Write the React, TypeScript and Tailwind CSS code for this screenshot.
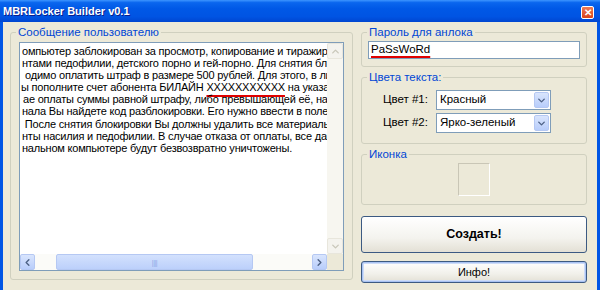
import { ChevronDown, ChevronUp, ChevronLeft, ChevronRight } from "lucide-react";

const LINES: { text: string; pad: number }[] = [
  { text: "омпьютер заблокирован за просмотр, копирование и тиражирование", pad: 2 },
  { text: "нтами педофилии, детского порно и гей-порно. Для снятия блокировки", pad: 2 },
  { text: "одимо оплатить штраф в размере 500 рублей. Для этого, в личном", pad: 5 },
  { text: "", pad: 1 },
  { text: "ае оплаты суммы равной штрафу, либо превышающей её, на чеке", pad: 3 },
  { text: "нала Вы найдете код разблокировки. Его нужно ввести в поле", pad: 2 },
  { text: " После снятия блокировки Вы должны удалить все материалы", pad: 2 },
  { text: "нты насилия и педофилии. В случае отказа от оплаты, все данные", pad: 2 },
  { text: "нальном компьютере будут безвозвратно уничтожены.", pad: 2 },
];

function GroupBox({
  title,
  className,
  children,
}: {
  title: string;
  className?: string;
  children?: React.ReactNode;
}) {
  return (
    <div className={`relative border border-[#d0d0bf] rounded-[3px] ${className ?? ""}`}>
      <span className="absolute -top-[8px] left-[5px] bg-[#ece9d8] px-[2px] text-[11.5px] leading-[14px] text-[#0046d5]">
        {title}
      </span>
      {children}
    </div>
  );
}

function Combo({ value }: { value: string }) {
  return (
    <div className="w-[115px] h-[20px] border border-[#7f9db9] bg-white flex items-center">
      <span className="flex-1 pl-[3px] text-[11.5px] text-black">{value}</span>
      <span className="w-[15px] h-[16px] mr-[1px] rounded-[2px] bg-[linear-gradient(#d9e5fd,#b8cdfb)] border border-[#b5c8f3] flex items-center justify-center">
        <ChevronDown className="w-[11px] h-[11px] text-[#4d6185]" strokeWidth={3} />
      </span>
    </div>
  );
}

export default function App() {
  return (
    <div className="w-[600px] h-[293px] bg-white font-['Liberation_Sans',Arial,sans-serif] select-none">
      <div className="w-[600px] h-[290px] flex flex-col bg-[#0055e5]">
        {/* title bar */}
        <div className="h-[22px] shrink-0 flex items-center justify-between pl-[3px] pr-[6px] bg-[linear-gradient(#3d95ff_0%,#0a66ee_12%,#0058e6_40%,#0054e3_75%,#0046d0_100%)]">
          <span className="text-white font-bold text-[11px] [text-shadow:1px_1px_0_#0a1e8c]">
            MBRLocker Builder v0.1
          </span>
          <span className="mt-[3px] w-[13px] h-[13px] rounded-[2px] border border-white bg-[linear-gradient(#ec7a55,#d8431a)] flex items-center justify-center text-white text-[10px] font-bold leading-none">
            ✕
          </span>
        </div>

        {/* client area */}
        <div className="flex-1 mx-[3px] mb-[3px] bg-[#ece9d8] flex gap-[8px] pl-[7px] pr-[10px] pt-[10px] pb-[7px]">
          <GroupBox title="Сообщение пользователю" className="w-[343px] h-[248px] p-[8px] pt-[9px]">
            <div className="w-full h-full border border-[#7f9db9] bg-white grid grid-cols-[1fr_16px] grid-rows-[1fr_16px]">
              <div className="overflow-hidden pt-[2px] text-[11px] tracking-[-0.2px] leading-[12.1px] text-black whitespace-pre">
                {LINES.map((l, i) =>
                  i === 3 ? (
                    <div key={i} style={{ paddingLeft: l.pad }}>
                      ы пополните счет абонента БИЛАЙН{" "}
                      <span className="underline decoration-[#e00000] decoration-2 underline-offset-[4px]">
                        XXXXXXXXXXX
                      </span>{" "}
                      на указанный
                    </div>
                  ) : (
                    <div key={i} style={{ paddingLeft: l.pad }}>
                      {l.text}
                    </div>
                  ),
                )}
              </div>
              {/* vertical scrollbar (disabled) */}
              <div className="flex flex-col bg-[#f7f6f0]">
                <div className="h-[16px] border border-[#e8e6dc] rounded-[2px] bg-[#f4f3ee] flex items-center justify-center">
                  <ChevronUp className="w-[11px] h-[11px] text-[#c9c7ba]" strokeWidth={3} />
                </div>
                <div className="flex-1" />
                <div className="h-[16px] border border-[#e8e6dc] rounded-[2px] bg-[#f4f3ee] flex items-center justify-center">
                  <ChevronDown className="w-[11px] h-[11px] text-[#c9c7ba]" strokeWidth={3} />
                </div>
              </div>
              {/* horizontal scrollbar */}
              <div className="flex bg-[#fbfbf8] items-stretch">
                <div className="w-[15px] rounded-[2px] border border-[#b5c8f3] bg-[linear-gradient(#d9e5fd,#b8cdfb)] flex items-center justify-center">
                  <ChevronLeft className="w-[11px] h-[11px] text-[#4d6185]" strokeWidth={3} />
                </div>
                <div className="w-[21px]" />
                <div className="w-[197px] rounded-[2px] border border-[#b5c8f3] bg-[linear-gradient(#d3e1fd,#bcd0fb)] flex items-center justify-center">
                  <span className="text-[7px] leading-none text-[#8fa9e6] tracking-[-0.5px]">||||</span>
                </div>
                <div className="flex-1" />
                <div className="w-[15px] rounded-[2px] border border-[#b5c8f3] bg-[linear-gradient(#d9e5fd,#b8cdfb)] flex items-center justify-center">
                  <ChevronRight className="w-[11px] h-[11px] text-[#4d6185]" strokeWidth={3} />
                </div>
              </div>
              <div className="bg-[#ece9d8]" />
            </div>
          </GroupBox>

          <div className="w-[226px] flex flex-col">
            <GroupBox title="Пароль для анлока" className="h-[35px] pl-[6px] pr-[6px] pt-[8px]">
              <div className="h-[18px] border border-[#7f9db9] bg-white flex items-center pl-[2px]">
                <span className="text-[11.5px] text-black underline decoration-[#e00000] decoration-2 underline-offset-[3px]">
                  PaSsWoRd
                </span>
              </div>
            </GroupBox>

            <GroupBox title="Цвета текста:" className="mt-[10px] h-[67px] pt-[12px] pl-[21px]">
              <div className="flex flex-col gap-[3px]">
                <div className="flex items-center">
                  <span className="w-[53px] text-[11.5px] text-black">Цвет #1:</span>
                  <Combo value="Красный" />
                </div>
                <div className="flex items-center">
                  <span className="w-[53px] text-[11.5px] text-black">Цвет #2:</span>
                  <Combo value="Ярко-зеленый" />
                </div>
              </div>
            </GroupBox>

            <GroupBox title="Иконка" className="mt-[10px] h-[51px] flex items-center justify-center">
              <div className="w-[32px] h-[33px] border border-t-[#c9c6b6] border-l-[#c9c6b6] border-b-white border-r-white" />
            </GroupBox>

            <button className="mt-[11px] h-[37px] rounded-[3px] border border-[#3c5a82] bg-[linear-gradient(#ffffff,#f4f3ee_60%,#e3e0d5)] text-[12.5px] font-bold text-black">
              Создать!
            </button>
            <button className="mt-[8px] h-[22px] rounded-[3px] border border-[#3c5a82] bg-[linear-gradient(#ffffff,#f1f0ea_60%,#e3e0d5)] shadow-[inset_0_0_0_1px_#a9c2f2,inset_0_0_0_2px_#cddcf8] text-[11px] text-black">
              Инфо!
            </button>
          </div>
        </div>
      </div>
    </div>
  );
}
